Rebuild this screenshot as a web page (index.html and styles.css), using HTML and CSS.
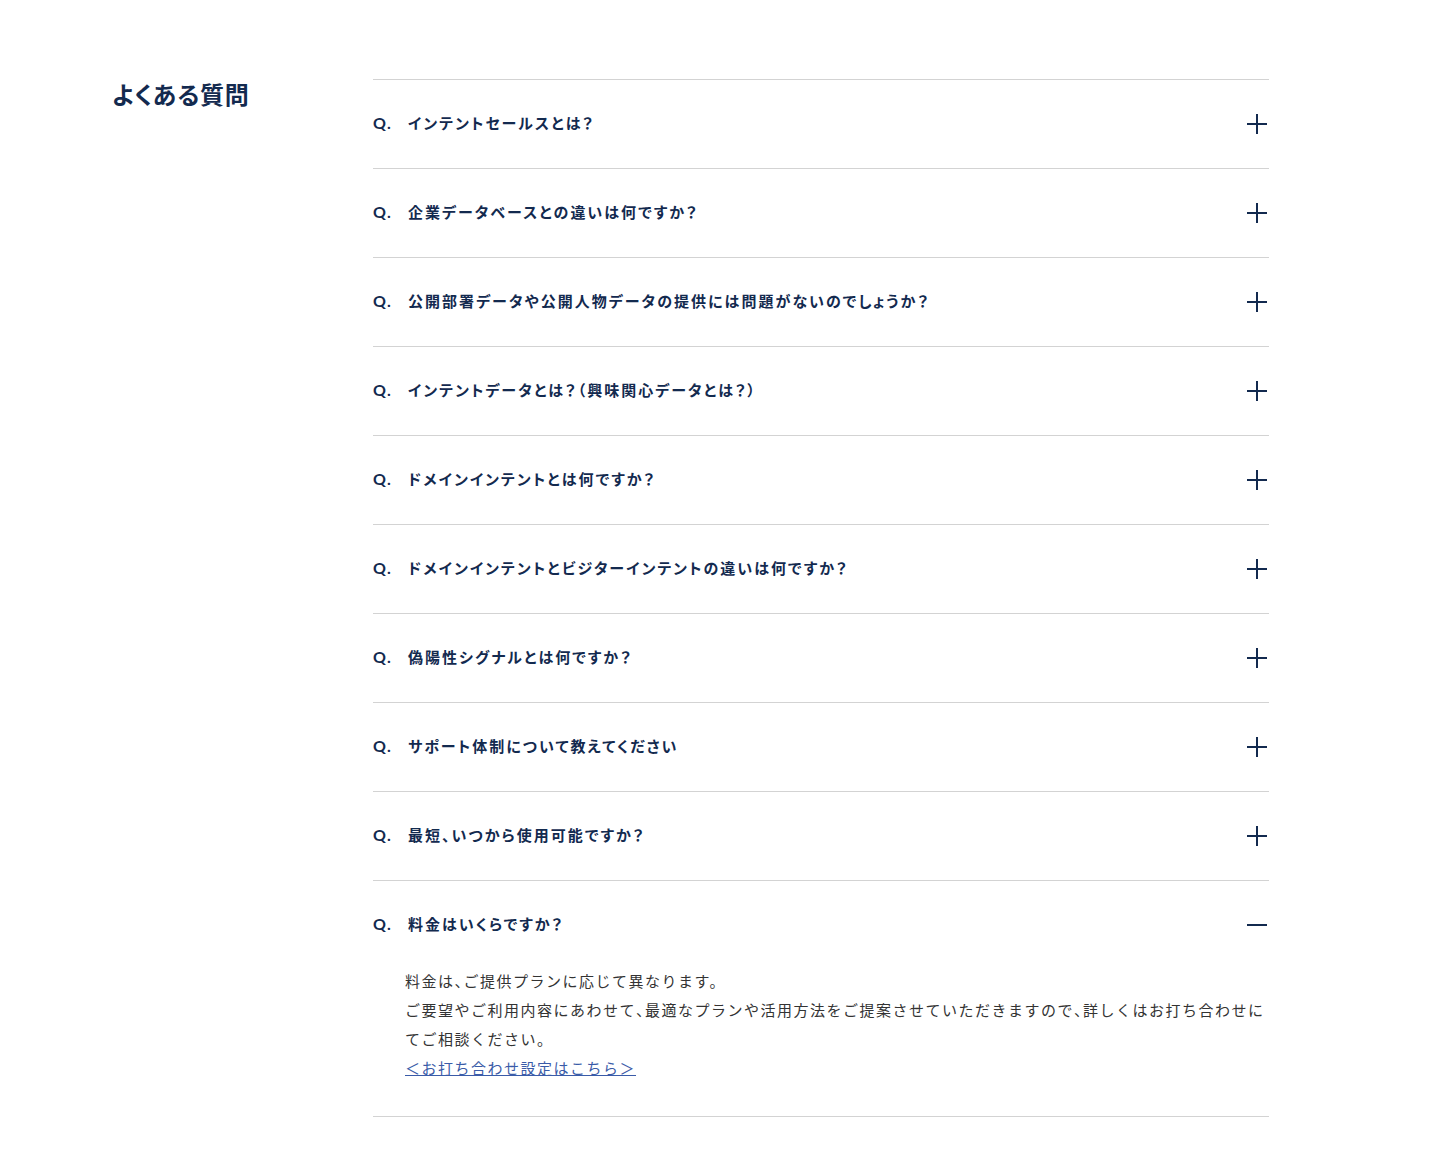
FILE: index.html
```html
<!DOCTYPE html>
<html lang="ja">
<head>
<meta charset="utf-8">
<title>よくある質問</title>
<link rel="stylesheet" href="styles.css">
</head>
<body>
<section class="faq">
  <h2 class="faq-title">よくある質問</h2>
  <ul class="faq-list">
    <li class="faq-item">
      <div class="faq-q"><span class="q-mark">Q.</span><span class="q-text">インテントセールスとは？</span><span class="toggle plus"></span></div>
    </li>
    <li class="faq-item">
      <div class="faq-q"><span class="q-mark">Q.</span><span class="q-text">企業データベースとの違いは何ですか？</span><span class="toggle plus"></span></div>
    </li>
    <li class="faq-item">
      <div class="faq-q"><span class="q-mark">Q.</span><span class="q-text">公開部署データや公開人物データの提供には問題がないのでしょうか？</span><span class="toggle plus"></span></div>
    </li>
    <li class="faq-item">
      <div class="faq-q"><span class="q-mark">Q.</span><span class="q-text">インテントデータとは？（興味関心データとは？）</span><span class="toggle plus"></span></div>
    </li>
    <li class="faq-item">
      <div class="faq-q"><span class="q-mark">Q.</span><span class="q-text">ドメインインテントとは何ですか？</span><span class="toggle plus"></span></div>
    </li>
    <li class="faq-item">
      <div class="faq-q"><span class="q-mark">Q.</span><span class="q-text">ドメインインテントとビジターインテントの違いは何ですか？</span><span class="toggle plus"></span></div>
    </li>
    <li class="faq-item">
      <div class="faq-q"><span class="q-mark">Q.</span><span class="q-text">偽陽性シグナルとは何ですか？</span><span class="toggle plus"></span></div>
    </li>
    <li class="faq-item">
      <div class="faq-q"><span class="q-mark">Q.</span><span class="q-text">サポート体制について教えてください</span><span class="toggle plus"></span></div>
    </li>
    <li class="faq-item">
      <div class="faq-q"><span class="q-mark">Q.</span><span class="q-text">最短<span class="hw">、</span>いつから使用可能ですか？</span><span class="toggle plus"></span></div>
    </li>
    <li class="faq-item is-open">
      <div class="faq-q"><span class="q-mark">Q.</span><span class="q-text">料金はいくらですか？</span><span class="toggle minus"></span></div>
      <div class="faq-a">
        <p>料金は<span class="hw">、</span>ご提供プランに応じて異なります。<br>ご要望やご利用内容にあわせて<span class="hw">、</span>最適なプランや活用方法をご提案させていただきますので<span class="hw">、</span>詳しくはお打ち合わせにてご相談ください。<br><a href="#" class="faq-link">＜お打ち合わせ設定はこちら＞</a></p>
      </div>
    </li>
  </ul>
</section>
</body>
</html>
```

FILE: styles.css
```css
* {
  box-sizing: border-box;
}

body {
  margin: 0;
  background: #fff;
  color: #132a4f;
  font-family: "Noto Sans CJK JP", "Noto Sans", sans-serif;
}

.faq {
  display: flex;
  padding: 79px 0 58px 112px;
}

.faq-title {
  width: 261px;
  flex-shrink: 0;
  margin: 0;
  font-size: 24px;
  line-height: 30px;
  font-weight: 700;
  font-feature-settings: "palt";
  letter-spacing: 0.03em;
  color: #132a4f;
}

.faq-list {
  width: 896px;
  margin: 0;
  padding: 0;
  list-style: none;
  border-top: 1px solid #d3d3d3;
}

.faq-item {
  border-bottom: 1px solid #d3d3d3;
}

.faq-q {
  display: flex;
  align-items: center;
  height: 88px;
  font-size: 15px;
  font-weight: 700;
  letter-spacing: 0.135em;
  font-feature-settings: "palt";
}

.q-mark,
.q-text {
  margin-top: -4px;
}

.q-mark {
  width: 35px;
  flex-shrink: 0;
  font-family: "Lato", "Noto Sans", sans-serif;
  font-size: 16px;
  letter-spacing: 0.08em;
}

.q-text {
  flex: 1;
}

/* half-width punctuation */
.hw {
  font-feature-settings: "halt";
}

.toggle {
  position: relative;
  width: 20px;
  height: 20px;
  margin-right: 2px;
}

.toggle::before,
.toggle::after {
  content: "";
  position: absolute;
  background: #132a4f;
}

.toggle::before {
  left: 0;
  top: 9px;
  width: 20px;
  height: 2px;
}

.plus::after {
  left: 9px;
  top: 0;
  width: 2px;
  height: 20px;
}

.minus::after {
  display: none;
}

.faq-a {
  margin-top: -3px;
  padding: 0 0 34px 32px;
}

.faq-a p {
  margin: 0;
  font-size: 15px;
  line-height: 29px;
  letter-spacing: 0.1em;
  color: #333;
}

.faq-link {
  color: #3a5ba8;
  text-decoration: underline;
}
```
